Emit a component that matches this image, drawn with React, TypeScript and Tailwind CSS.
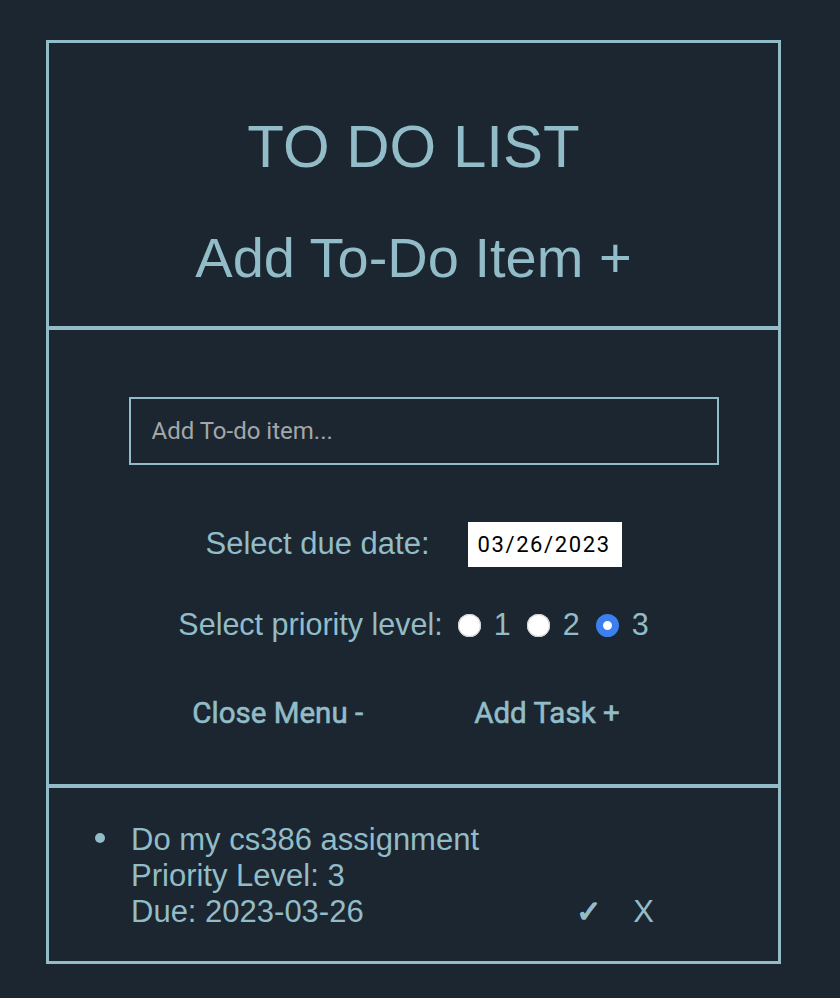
import { useState } from "react";

const priorities = [1, 2, 3];

export default function App() {
	const [priority, setPriority] = useState(3);

	return (
		<div className="min-h-screen w-full bg-[#1b2630] pt-10 font-['Liberation_Sans',Arial,sans-serif] text-[#92bcc7]">
			<div className="ml-[46px] w-[735px] border-[3px] border-[#92bcc7]">
				<div className="flex flex-col items-center border-b-4 border-[#92bcc7] pt-[74px] pb-[40px]">
					<h1 className="text-[60px] leading-none font-light">TO DO LIST</h1>
					<h2 className="mt-[53px] text-[56px] leading-none">Add To-Do Item +</h2>
				</div>

				<div className="flex flex-col border-b-4 border-[#92bcc7] pt-[67px] pb-[51px]">
					<div className="flex justify-center pl-[20px]">
						<input
							type="text"
							placeholder="Add To-do item..."
							className="h-[68px] w-[590px] border-2 border-[#92bcc7] bg-transparent px-[21px] font-['Roboto',sans-serif] text-[24px] text-[#c8d4d8] outline-none placeholder:text-[#a3a7a9]"
						/>
					</div>

					<div className="mt-[57px] flex h-[45px] items-center justify-center gap-[38px]">
						<span className="text-[31px]">Select due date:</span>
						<input
							type="text"
							readOnly
							value="03/26/2023"
							className="h-[45px] w-[154px] bg-white px-[10px] font-['Roboto',sans-serif] text-[22px] tracking-[1.6px] text-black outline-none"
						/>
					</div>

					<div className="mt-[38px] flex h-[40px] items-center justify-center">
						<span className="mr-[15px] text-[30.5px]">Select priority level:</span>
						<div className="flex items-center gap-[16px]">
							{priorities.map((p) => (
								<label key={p} className="flex items-center gap-[13px] text-[30.5px]">
									<input
										type="radio"
										name="priority"
										checked={priority === p}
										onChange={() => setPriority(p)}
										className="h-[23px] w-[23px] appearance-none rounded-full bg-white shadow-[inset_0_0_0_1px_#cfcfcf] checked:border-[7px] checked:border-[#3b7ff0] checked:shadow-none"
									/>
									{p}
								</label>
							))}
						</div>
					</div>

					<div className="mt-[48px] flex h-[40px] items-center justify-center gap-[111px] pr-[15px] font-['Roboto',sans-serif] text-[29.5px] [-webkit-text-stroke:0.6px_#92bcc7]">
						<button type="button">Close Menu -</button>
						<button type="button">Add Task +</button>
					</div>
				</div>

				<ul className="pt-[34px] pb-[31px]">
					<li className="flex items-end">
						<span className="mt-[11px] ml-[46px] h-[10px] w-[10px] shrink-0 self-start rounded-full bg-[#92bcc7]" />
						<div className="ml-[26px] flex flex-col text-[31px] leading-[36px]">
							<span>Do my cs386 assignment</span>
							<span>Priority Level: 3</span>
							<span>Due: 2023-03-26</span>
						</div>
						<div className="mr-[124px] ml-auto flex items-end gap-[32px] text-[31px] leading-[36px]">
							<button type="button" className="font-['DejaVu_Sans',sans-serif] text-[30px] [-webkit-text-stroke:1.5px_#92bcc7]">
								✓
							</button>
							<button type="button">X</button>
						</div>
					</li>
				</ul>
			</div>
		</div>
	);
}
